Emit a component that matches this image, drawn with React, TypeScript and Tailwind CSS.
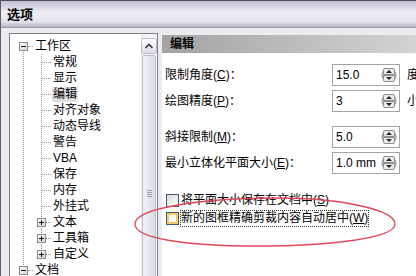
import React from 'react';

type Kind = 'pipe' | 'tee' | 'last' | 'first' | 'none';

function TreeCell({ kind, box }: { kind: Kind; box?: 'plus' | 'minus' }) {
  const v =
    kind === 'pipe' || kind === 'tee' ? [0, 16] : kind === 'last' ? [0, 8] : kind === 'first' ? [8, 16] : null;
  const h = kind === 'tee' || kind === 'last' || kind === 'first';
  return (
    <svg width="18" height="16" viewBox="0 0 18 16" className="block shrink-0">
      <defs>
        <linearGradient id="bx" x1="0" y1="0" x2="1" y2="1">
          <stop offset="0" stopColor="#ffffff" />
          <stop offset="1" stopColor="#d6d3cb" />
        </linearGradient>
      </defs>
      {v && <line x1="8.5" y1={v[0]} x2="8.5" y2={v[1]} stroke="#9a9a9a" strokeDasharray="1 1" />}
      {h && <line x1="9" y1="8.5" x2="18" y2="8.5" stroke="#9a9a9a" strokeDasharray="1 1" />}
      {box && (
        <g>
          <rect x="4.5" y="4.5" width="8" height="8" fill="url(#bx)" stroke="#8c8c8c" />
          <rect x="6" y="8" width="5" height="1" fill="#111" />
          {box === 'plus' && <rect x="8" y="6" width="1" height="5" fill="#111" />}
        </g>
      )}
    </svg>
  );
}

function TreeRow({
  level,
  label,
  c1,
  c2,
  box,
  selected,
}: {
  level: 0 | 1;
  label: string;
  c1: Kind;
  c2?: Kind;
  box?: 'plus' | 'minus';
  selected?: boolean;
}) {
  return (
    <div className="flex h-[16px] items-center">
      <TreeCell kind={c1} box={level === 0 ? box : undefined} />
      {level === 1 && <TreeCell kind={c2 || 'tee'} box={box} />}
      <span
        className={
          selected
            ? 'ml-[1px] px-[1px] h-[15px] flex items-center bg-[#e0e0e0] leading-none whitespace-nowrap'
            : 'ml-[2px] h-[15px] flex items-center leading-none whitespace-nowrap'
        }
      >
        {label}
      </span>
    </div>
  );
}

function Spinner() {
  return (
    <svg width="16" height="16" viewBox="0 0 16 16" className="block shrink-0">
      <rect x="0.5" y="3.5" width="15" height="9" rx="4" fill="#a8a8a8" />
      <rect x="2.5" y="1.5" width="11" height="6" rx="1.5" fill="#ececec" stroke="#8e8e8e" />
      <rect x="2.5" y="8.5" width="11" height="6" rx="1.5" fill="#ececec" stroke="#8e8e8e" />
      <path d="M5 6 L8 3 L11 6 Z" fill="#222" />
      <path d="M5 10 L8 13 L11 10 Z" fill="#222" />
    </svg>
  );
}

function SpinRow({
  mt,
  label,
  value,
  unit,
}: {
  mt: string;
  label: React.ReactNode;
  value: string;
  unit?: string;
}) {
  return (
    <div className={`${mt} flex items-center h-[22px] whitespace-nowrap`}>
      <div className="w-[167px] shrink-0 leading-none">{label}</div>
      <div className="w-[68px] h-[22px] shrink-0 border border-[#a4a4a4] bg-white flex items-center pl-[3px] pr-[2px]">
        <span className="flex-1 leading-none">{value}</span>
        <Spinner />
      </div>
      {unit && <span className="ml-[7px] leading-none">{unit}</span>}
    </div>
  );
}

export default function App() {
  return (
    <div className="w-[416px] h-[276px] overflow-hidden relative bg-[#ecebf0] border-l border-[#5c5c6a] flex flex-col text-[12px] text-black font-['Liberation_Sans','Noto_Sans_CJK_SC',sans-serif]">
      {/* title bar */}
      <div className="h-[28px] shrink-0 border-t border-b border-t-[#4e4e5c] border-b-[#9c9cae] bg-[linear-gradient(to_bottom,#c2c2d4_0%,#eeeef5_45%,#e2e2ec_80%,#b6b6ca_100%)] flex items-center pl-[6px]">
        <span className="text-[13px] font-bold leading-none">选项</span>
      </div>

      {/* body */}
      <div className="flex pt-[5px] pl-[8px] gap-[4px]">
        {/* tree panel */}
        <div className="w-[149px] h-[260px] shrink-0 border border-[#7f7f7f] bg-white flex">
          <div className="flex-1 flex flex-col pt-[4px] pl-[5px]">
            <TreeRow level={0} label="工作区" c1="first" box="minus" />
            <TreeRow level={1} label="常规" c1="pipe" />
            <TreeRow level={1} label="显示" c1="pipe" />
            <TreeRow level={1} label="编辑" c1="pipe" selected />
            <TreeRow level={1} label="对齐对象" c1="pipe" />
            <TreeRow level={1} label="动态导线" c1="pipe" />
            <TreeRow level={1} label="警告" c1="pipe" />
            <TreeRow level={1} label="VBA" c1="pipe" />
            <TreeRow level={1} label="保存" c1="pipe" />
            <TreeRow level={1} label="内存" c1="pipe" />
            <TreeRow level={1} label="外挂式" c1="pipe" />
            <TreeRow level={1} label="文本" c1="pipe" box="plus" />
            <TreeRow level={1} label="工具箱" c1="pipe" box="plus" />
            <TreeRow level={1} label="自定义" c1="pipe" c2="last" box="plus" />
            <TreeRow level={0} label="文档" c1="tee" box="minus" />
          </div>
          {/* scrollbar */}
          <div className="w-[16px] shrink-0 flex flex-col pt-[4px] bg-[linear-gradient(to_right,#f0f0f4,#fbfbfd)]">
            <div className="h-[16px] shrink-0 rounded-[2px] border border-[#b9bccb] bg-[linear-gradient(to_bottom,#ffffff,#dcdce6)] flex items-center justify-center">
              <svg width="10" height="8" viewBox="0 0 10 8" className="block">
                <polyline points="1.5,6 5,2.5 8.5,6" fill="none" stroke="#3a3a3a" strokeWidth="1.6" />
              </svg>
            </div>
            <div className="mt-[1px] mx-[1px] flex-1 rounded-[2px] border border-[#b8bccd] bg-[linear-gradient(to_right,#f2f3f8,#d8dbe6)] flex flex-col items-center">
              <div className="mt-[134px] flex flex-col gap-[1px]">
                <div className="w-[5px] h-[1px] bg-[#9a9eae]" />
                <div className="w-[5px] h-[1px] bg-[#9a9eae]" />
                <div className="w-[5px] h-[1px] bg-[#9a9eae]" />
                <div className="w-[5px] h-[1px] bg-[#9a9eae]" />
              </div>
            </div>
          </div>
        </div>

        {/* right panel */}
        <div className="w-[260px] h-[260px] shrink-0 mt-[2px] bg-white flex flex-col">
          <div className="h-[18px] shrink-0 bg-[linear-gradient(to_right,#a3a3a3,#d4d4d4)] flex items-center pl-[8px]">
            <span className="font-bold leading-none">编辑</span>
          </div>
          <div className="flex flex-col pl-[3px]">
            <SpinRow
              mt="mt-[11px]"
              label={
                <>
                  限制角度(<u>C</u>)：
                </>
              }
              value="15.0"
              unit="度"
            />
            <SpinRow
              mt="mt-[4px]"
              label={
                <>
                  绘图精度(<u>P</u>)：
                </>
              }
              value="3"
              unit="小数"
            />
            <SpinRow
              mt="mt-[14px]"
              label={
                <>
                  斜接限制(<u>M</u>)：
                </>
              }
              value="5.0"
            />
            <SpinRow
              mt="mt-[4px]"
              label={
                <>
                  最小立体化平面大小(<u>E</u>)：
                </>
              }
              value="1.0 mm"
            />
            <div className="mt-[17px] h-[18px] flex items-center whitespace-nowrap">
              <div className="ml-[1px] w-[13px] h-[13px] shrink-0 border border-[#3d5a80] bg-[linear-gradient(135deg,#d9d9d4,#ffffff)]" />
              <span className="ml-[2px] leading-none">
                将平面大小保存在文档中(<u>S</u>)
              </span>
            </div>
            <div className="h-[18px] flex items-center whitespace-nowrap">
              <div className="ml-[1px] w-[13px] h-[13px] shrink-0 border border-[#3d5a80] bg-[linear-gradient(135deg,#f3f1e8,#ffffff)] shadow-[inset_0_0_0_2px_#f6c96a]" />
              <span className="ml-[1px] h-[17px] flex items-center border border-dotted border-[#333] leading-none">
                新的图框精确剪裁内容自动居中(<u>W</u>)
              </span>
            </div>
          </div>
        </div>
      </div>

      {/* red annotation ellipse */}
      <svg className="absolute left-0 top-0 pointer-events-none" width="416" height="276" viewBox="-1 0 416 276">
        <path
          d="M133,224 C133,208 200,198 275,198 C340,198 393,210 393,224 C393,238 330,246 255,246 C180,246 133,238 133,224 Z"
          fill="none"
          stroke="#e04858"
          strokeWidth="1.3"
        />
      </svg>
    </div>
  );
}
